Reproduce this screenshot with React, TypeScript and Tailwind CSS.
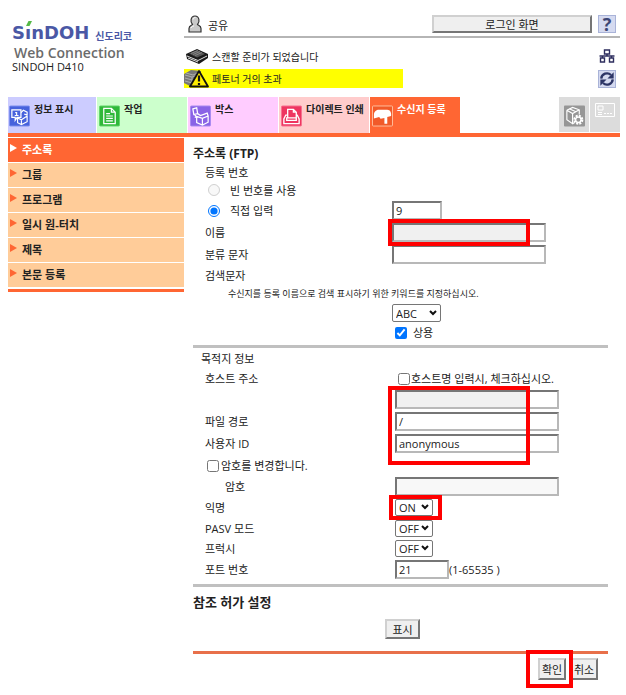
import type { ComponentProps, ReactNode } from 'react';
import clsx from 'clsx';

type Tab = {
  label: string;
  tabClass: string;
  icon: ReactNode;
};

const BoxIcon = () => (
  <svg viewBox="0 0 22 22" className="h-[22px] w-[21px] shrink-0">
    <rect x="0.5" y="0.5" width="21" height="21" rx="1" fill="#8a63e6" stroke="#a98cf0" />
    <path d="M3 3.500l4-1 1 6-4 1zM5 9.500l2 3M8 8.500l3 2 7-2.500 1 3-6 2.500-6-2v6.500l6 2.500 6-3v-6M13 13.500v7M7 11.500l-2 1" fill="none" stroke="#fff" strokeWidth="1.300" />
  </svg>
);

const InfoIcon = () => (
  <svg viewBox="0 0 22 22" className="h-[22px] w-[21px] shrink-0">
    <rect x="0.5" y="0.5" width="21" height="21" rx="1" fill="#4762dc" stroke="#7d90ee" />
    <path d="M12 8l3-3 4 2v3M9 13l4 2 6-4v6l-6 3-4-2zM13 15v5M19 10l-3-1" fill="none" stroke="#fff" strokeWidth="1.200" />
    <path d="M3 4.500h9.500v8h-4l-2 3v-3H3z" fill="#4762dc" stroke="#fff" strokeWidth="1.300" />
    <path d="M6.500 7.500h1.500v3M6 10.500h4" fill="none" stroke="#fff" strokeWidth="1.200" />
  </svg>
);

const JobIcon = () => (
  <svg viewBox="0 0 22 22" className="h-[22px] w-[21px] shrink-0">
    <rect x="0.5" y="0.5" width="21" height="21" rx="1" fill="#2fb83a" stroke="#62d56a" />
    <path d="M5 3h8l4 4v12H5zM13 3v4h4M7.500 8.500h4M7.500 11h7M7.500 13.500h7M7.500 16h7" fill="none" stroke="#fff" strokeWidth="1.300" />
  </svg>
);

const PrintIcon = () => (
  <svg viewBox="0 0 22 22" className="h-[22px] w-[21px] shrink-0">
    <rect x="0.5" y="0.5" width="21" height="21" rx="1" fill="#ee3560" stroke="#f7708f" />
    <path d="M7 13V4h6l3 3v6M13 4v3h3M7 10H5l-2 4v5h16v-5l-2-4h-1M6 13h10v2.500H6z" fill="none" stroke="#fff" strokeWidth="1.400" />
  </svg>
);

const MailboxIcon = () => (
  <svg viewBox="0 0 22 22" className="h-[22px] w-[21px] shrink-0">
    <rect x="0.5" y="0.5" width="21" height="21" rx="1" fill="#f15a29" stroke="#ffc0a0" />
    <path d="M2 10c0-4 3-5.500 5-5.500h9c3 0 4.500 3 4 6.500l-4 1v7h-3v-6l-4 1-1.500-2-5.500 1.500z" fill="#fff" />
  </svg>
);

const UserIcon = () => (
  <svg viewBox="0 0 14 18" className="h-[18px] w-[14px]">
    <path d="M4.500 9.500C2 7 2.500 1 7 1s5 6 2.500 8.500c.5 1 3.500 1 3.500 4V17H1v-3.500c0-3 3-3 3.500-4z" fill="#c9c9c9" stroke="#333" strokeWidth="1.200" />
    <path d="M5 4.500C5.500 3 6.500 2.500 7.500 2.500M3 13c.5-1.500 1.500-2 3-2" fill="none" stroke="#fff" />
  </svg>
);

const ScannerIcon = () => (
  <svg viewBox="0 0 22 16" className="h-4 w-[22px]">
    <path d="M0 6L11 1l11 5v4l-9 6L1 11z" fill="#1a1a1a" />
    <path d="M3 5.500L11 2l8 4-8 3.500z" fill="#555" />
    <path d="M5 5.500l7-3M7 6.500l7-3M9 7.500l7-3" stroke="#999" strokeWidth="0.7" />
    <path d="M1 8l11 4.500L21 8M2 10l10 4" fill="none" stroke="#ddd" strokeWidth="1" />
  </svg>
);

const WarningIcon = () => (
  <svg viewBox="0 0 26 19" className="h-[19px] w-[26px]">
    <path d="M0 5l7-4 10 1v14l-9 2-8-4z" fill="#777" />
    <path d="M1 6l7 2v9M1 9l7 2M1 12l7 2M8 8l8-3M2 4l7 2 7-3" fill="none" stroke="#bbb" strokeWidth="0.8" />
    <path d="M15 2L6 17.500h18z" fill="#ffee00" stroke="#111" strokeWidth="1.800" strokeLinejoin="round" />
    <path d="M15 6.500v6M15 14v2" stroke="#111" strokeWidth="2.200" />
  </svg>
);

const NetworkIcon = () => (
  <svg viewBox="0 0 16 14" className="h-[14px] w-4">
    <path d="M5.500 1h5v4h-5zM1.500 9h4v4h-4zM10.500 9h4v4h-4zM8 5v2M0.500 7h15M3.500 7v2M12.500 7v2" fill="none" stroke="#2d2d5e" strokeWidth="1.400" />
  </svg>
);

const RefreshIcon = () => (
  <svg viewBox="0 0 18 18" className="h-full w-full">
    <path d="M2.500 8.500A6.500 6.500 0 0 1 13.500 4.500M15.500 9.500A6.500 6.500 0 0 1 4.500 13.500" fill="none" stroke="#2d3566" strokeWidth="2.600" />
    <path d="M16.500 1.500v7h-7zM1.500 16.500v-7h7z" fill="#2d3566" />
  </svg>
);

const AdminIcon = () => (
  <svg viewBox="0 0 22 22" className="h-[22px] w-[21px]">
    <rect width="22" height="22" rx="1" fill="#969696" />
    <path d="M3 5l6-3 7 2.500v5M3 5v10l6 4V8.500M3 5l6 3.500 7-4M5.500 3.500l7 3M9 19l2-1" fill="none" stroke="#fff" strokeWidth="1.200" />
    <circle cx="15" cy="15" r="4" fill="none" stroke="#fff" strokeWidth="2.500" strokeDasharray="2 1.140" />
    <circle cx="15" cy="15" r="2.800" fill="#969696" stroke="#fff" strokeWidth="1.400" />
  </svg>
);

const PanelIcon = () => (
  <svg viewBox="0 0 20 14" className="h-[14px] w-5">
    <path d="M.5.5h19v13H.5zM3 3h5v4H3zM3 9.500h4M3 11.500h4M9 10.500h2M12 10.500h2M15 10.500h2" fill="none" stroke="#fff" />
  </svg>
);

const tabs: Tab[] = [
  { label: '정보 표시', tabClass: 'bg-[#ccccff]', icon: <InfoIcon /> },
  { label: '작업', tabClass: 'bg-[#ccffcc]', icon: <JobIcon /> },
  { label: '박스', tabClass: 'bg-[#ffccff]', icon: <BoxIcon /> },
  { label: '다이렉트 인쇄', tabClass: 'bg-[#ffcccc]', icon: <PrintIcon /> },
  { label: '수신지 등록', tabClass: 'bg-[#ff6633] text-white', icon: <MailboxIcon /> },
];

const menuItems = ['주소록', '그룹', '프로그램', '일시 원-터치', '제목', '본문 등록'];

const TextField = ({ className, ...props }: ComponentProps<'input'>) => (
  <input
    type="text"
    className={clsx(
      'block h-[19px] rounded-none border-2 border-t-[#767676] border-r-[#b8b8b8] border-b-[#b8b8b8] border-l-[#767676] px-0.5 text-[11px] leading-none',
      className
    )}
    {...props}
  />
);

type SelectFieldProps = ComponentProps<'select'> & { options: string[] };

const SelectField = ({ className, options, ...props }: SelectFieldProps) => (
  <div className="relative">
    <select
      className={clsx(
        'block appearance-none rounded-xs border border-[#767676] bg-white pl-[3px] text-[11px] leading-none',
        className
      )}
      {...props}
    >
      {options.map((option) => (
        <option key={option}>{option}</option>
      ))}
    </select>
    <svg viewBox="0 0 8 6" className="pointer-events-none absolute inset-y-0 right-1 my-auto h-1.5 w-2">
      <path d="M1 1l3 3 3-3" fill="none" stroke="#111" strokeWidth="2" />
    </svg>
  </div>
);

const PushButton = ({ className, ...props }: ComponentProps<'button'>) => (
  <button
    type="button"
    className={clsx(
      'border-2 border-t-[#d0d0d0] border-r-[#767676] border-b-[#767676] border-l-[#d0d0d0] bg-[#efefef] text-center text-[11px] leading-none whitespace-nowrap',
      className
    )}
    {...props}
  />
);

const Highlight = ({ className }: { className: string }) => (
  <span aria-hidden className={clsx('pointer-events-none absolute border-4 border-[#ff0000]', className)} />
);

// Grey patch that hides a private value
const Mask = () => <span aria-hidden className="absolute inset-y-0.5 left-0.5 w-[132px] bg-[#f0f0f0]" />;

type RowProps = {
  label?: ReactNode;
  htmlFor?: string;
  className?: string;
  children?: ReactNode;
};

const Row = ({ label, htmlFor, className = 'h-[22px]', children }: RowProps) => (
  <div className={clsx('flex items-center pl-3', className)}>
    <div className="w-[190px] shrink-0 pt-0.5">{htmlFor ? <label htmlFor={htmlFor}>{label}</label> : label}</div>
    {children}
  </div>
);

const Header = () => (
  <header className="flex">
    <div className="w-44 shrink-0 pt-[21px] pl-1">
      <div className="flex items-end gap-1.5 text-[#4a58a5]">
        <span className="relative font-['DejaVu_Sans'] text-lg leading-6 font-bold">
          SınDOH
          <svg viewBox="0 0 6 6" className="absolute top-0 left-3.5 size-1.5">
            <path d="M2.500 0H6L3.500 5H0z" fill="#55b947" />
          </svg>
        </span>
        <span className="pb-px text-[10px] font-bold">신도리코</span>
      </div>
      <div className="pl-0.5 text-sm leading-4 font-semibold text-[#6b6b6b]">Web Connection</div>
      <div className="text-[11px] leading-3">SINDOH D410</div>
    </div>
    <div className="min-w-0 flex-1 pt-3">
      <div className="flex h-[26px] items-center border-b-2 border-[#b5b5b5] pr-1 pl-1">
        <UserIcon />
        <span className="pt-1 pl-1.5">공유</span>
        <PushButton className="ml-auto h-[18px] w-[160px]">로그인 화면</PushButton>
        <button
          type="button"
          aria-label="도움말"
          className="ml-1.5 size-[18px] border border-[#a9b3d8] bg-[#d5daf0] text-lg leading-4 font-bold text-[#3c4675]"
        >
          ?
        </button>
      </div>
      <div className="mt-2 flex h-5 items-center justify-between pr-[5px] pl-0.5 text-[10px]">
        <span className="flex items-center gap-1">
          <ScannerIcon />
          <span className="pt-0.5">스캔할 준비가 되었습니다</span>
        </span>
        <NetworkIcon />
      </div>
      <div className="mt-[3px] flex items-center justify-between pr-1 text-[10px]">
        <span className="flex h-[19px] w-[219px] items-center gap-0.5 bg-[#ffff00]">
          <WarningIcon />
          페토너 거의 초과
        </span>
        <button type="button" aria-label="새로 고침" className="size-[18px] border border-[#a9b3d8] bg-[#d5daf0]">
          <RefreshIcon />
        </button>
      </div>
    </div>
  </header>
);

const TabBar = () => (
  <nav className="mt-[9px] flex border-b-4 border-[#ff6633]">
    <div className="flex gap-px">
      {tabs.map((tab, index) => (
        <a
          key={tab.label}
          href="#"
          className={clsx(
            'flex h-9 items-start gap-1 text-[10px] font-bold whitespace-nowrap',
            index === 0 ? 'w-[88px] pl-px' : 'w-[90px] pl-0.5',
            tab.tabClass
          )}
        >
          <span className="pt-2">{tab.icon}</span>
          <span className="pt-1">{tab.label}</span>
        </a>
      ))}
    </div>
    <div className="ml-auto flex gap-px">
      <button type="button" aria-label="관리자" className="flex h-[35px] w-[30px] justify-center bg-[#dcdcdc] pt-2">
        <AdminIcon />
      </button>
      <button type="button" aria-label="패널" className="flex h-[35px] w-[30px] justify-center bg-[#dcdcdc] pt-1.5">
        <PanelIcon />
      </button>
    </div>
  </nav>
);

const Sidebar = () => (
  <aside className="w-44 shrink-0 pt-px">
    <ul className="flex flex-col gap-px">
      {menuItems.map((item, index) => (
        <li key={item}>
          <a
            href="#"
            className={clsx(
              'flex h-6 items-start gap-[5px] pl-0.5 font-bold',
              index === 0 ? 'bg-[#ff6633] text-white' : 'bg-[#ffcc99] text-[#222]'
            )}
          >
            <svg viewBox="0 0 7 8" className={clsx('mt-1.5 h-2 w-[7px]', index === 0 ? 'fill-white' : 'fill-[#ff6633]')}>
              <path d="M0 0l7 4-7 4z" />
            </svg>
            <span className="pt-1">{item}</span>
          </a>
        </li>
      ))}
    </ul>
    <div className="mt-0.5 h-[3px] bg-[#ff6633]" />
  </aside>
);

const AddressForm = () => (
  <form className="min-w-0 flex-1 pt-1.5 pr-3 pl-[9px]">
    <h1 className="h-5 text-xs leading-[22px] font-bold">주소록 (FTP)</h1>
    <Row label="등록 번호" className="h-[18px]" />
    <div className="flex h-[18px] items-center gap-2.5 pl-[15px]">
      <input id="auto-number" type="radio" name="number" disabled className="size-3" />
      <label htmlFor="auto-number" className="pt-0.5">
        빈 번호를 사용
      </label>
    </div>
    <Row
      label={
        <span className="flex items-center gap-2.5 pl-[3px]">
          <input id="direct-number" type="radio" name="number" defaultChecked className="size-3" />
          <label htmlFor="direct-number">직접 입력</label>
        </span>
      }
    >
      <TextField aria-label="등록 번호" defaultValue="9" className="-ml-[3px] w-[50px]" />
    </Row>
    <Row label="이름" htmlFor="name">
      <div className="relative -ml-[3px]">
        <TextField id="name" className="w-[154px]" />
        <Mask />
        <Highlight className="-top-1 -left-1 h-[27px] w-[142px]" />
      </div>
    </Row>
    <Row label="분류 문자" htmlFor="sort">
      <TextField id="sort" className="-ml-[3px] w-[154px]" />
    </Row>
    <Row label="검색문자" htmlFor="search" className="h-5" />
    <p className="h-[18px] pl-[35px] text-[9px] leading-[18px] whitespace-nowrap">
      수신지를 등록 이름으로 검색 표시하기 위한 키워드를 지정하십시오.
    </p>
    <Row className="h-5">
      <div className="-ml-[3px]">
        <SelectField id="search" options={['ABC', 'DEF', 'GHI']} className="h-[18px] w-[49px]" />
      </div>
    </Row>
    <Row className="h-[18px]">
      <label className="flex items-center gap-1.5 pt-0.5">
        <input type="checkbox" defaultChecked className="size-3" />
        상용
      </label>
    </Row>

    <div className="mt-1 h-[3px] bg-[#c0c0c0]" />
    <h2 className="h-5 pl-2 leading-[22px]">목적지 정보</h2>
    <Row label="호스트 주소" htmlFor="host" className="h-5">
      <label className="flex items-center gap-px pt-0.5 pl-[3px] whitespace-nowrap">
        <input type="checkbox" className="size-3" />
        호스트명 입력시, 체크하십시오.
      </label>
    </Row>
    <Row>
      <div className="relative">
        <TextField id="host" className="w-[164px]" />
        <Mask />
        <Highlight className="-top-1 -left-[7px] z-10 h-[79px] w-[142px]" />
      </div>
    </Row>
    <Row label="파일 경로" htmlFor="path">
      <TextField id="path" defaultValue="/" className="w-[164px]" />
    </Row>
    <Row label="사용자 ID" htmlFor="user">
      <TextField id="user" defaultValue="anonymous" className="w-[164px]" />
    </Row>
    <Row
      label={
        <span className="flex items-center gap-0.5 pl-0.5">
          <input id="change-password" type="checkbox" className="size-3" />
          <label htmlFor="change-password">암호를 변경합니다.</label>
        </span>
      }
    />
    <Row label={<span className="pl-5">암호</span>} htmlFor="password" className="h-5">
      <TextField id="password" type="password" disabled className="w-[164px] bg-[#f8f8f8]" />
    </Row>
    <Row label="익명" htmlFor="anonymous">
      <div className="relative">
        <SelectField id="anonymous" options={['ON', 'OFF']} className="h-[17px] w-[38px]" />
        <Highlight className="-top-1 -left-1.5 h-[25px] w-[53px]" />
      </div>
    </Row>
    <Row label="PASV 모드" htmlFor="pasv" className="h-5">
      <SelectField id="pasv" options={['OFF', 'ON']} className="h-[17px] w-[38px]" />
    </Row>
    <Row label="프럭시" htmlFor="proxy" className="h-5">
      <SelectField id="proxy" options={['OFF', 'ON']} className="h-[17px] w-[38px]" />
    </Row>
    <Row label="포트 번호" htmlFor="port">
      <TextField id="port" defaultValue="21" className="w-[54px]" />
      <span className="pt-0.5">(1-65535 )</span>
    </Row>

    <div className="mt-1 h-[3px] bg-[#c0c0c0]" />
    <h2 className="mt-1 h-5 text-[13px] leading-[22px] font-bold">참조 허가 설정</h2>
    <div className="mt-2 flex justify-center pl-1">
      <PushButton className="h-5 w-[35px]">표시</PushButton>
    </div>
    <div className="mt-3 h-[3px] bg-[#e8704a]" />
    <div className="mt-1 flex justify-end gap-1 pr-2.5">
      <div className="relative">
        <PushButton className="h-[22px] w-7">확인</PushButton>
        <Highlight className="-top-2 -left-3 h-[38px] w-[47px]" />
      </div>
      <PushButton className="h-[22px] w-7">취소</PushButton>
    </div>
  </form>
);

export default function App() {
  return (
    <div className="min-h-screen bg-white pr-1.5 pl-2 font-['Open_Sans','Noto_Sans_CJK_KR',sans-serif] text-[11px] leading-4 text-[#222]">
      <Header />
      <TabBar />
      <div className="flex items-start">
        <Sidebar />
        <AddressForm />
      </div>
    </div>
  );
}
